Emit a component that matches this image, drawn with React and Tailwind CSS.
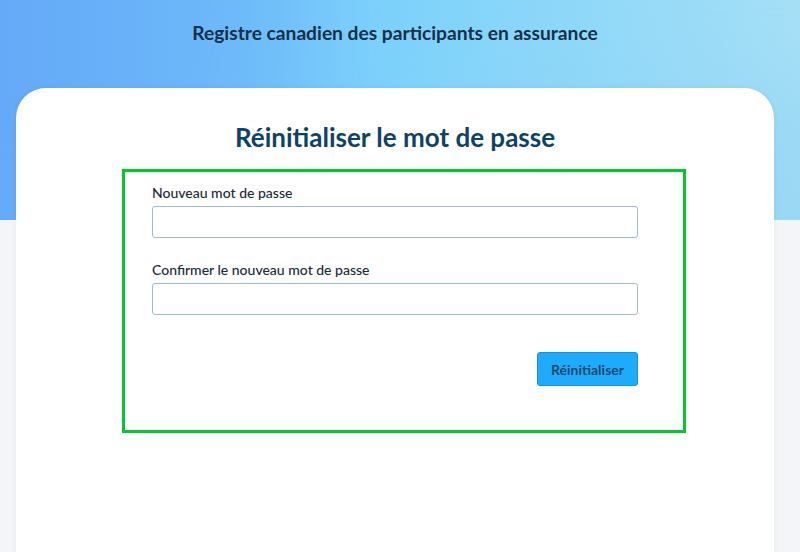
import React from "react";

export default function App() {
  return (
    <div
      className="relative w-full min-h-[552px] h-[552px] overflow-hidden bg-[#f4f5f8]"
      style={{ fontFamily: "Lato, 'Noto Sans', sans-serif" }}
    >
      <div className="absolute left-0 top-0 w-full h-[220px] bg-gradient-to-r from-[#68acf9] via-[#7dd2fb] to-[#a5dff6] overflow-hidden">
        <div className="absolute -left-[160px] -top-[200px] w-[460px] h-[460px] rounded-full bg-[#5ea5f7] opacity-30 blur-2xl" />
        <div className="absolute left-[380px] top-[90px] w-[560px] h-[300px] rounded-full bg-[#8ccff3] opacity-40 blur-2xl" />
      </div>
      <div className="relative flex flex-col">
        <div className="h-[66px] pr-[10px] flex items-center justify-center">
          <h1 className="text-[19.2px] font-bold text-[#15304a]">
            Registre canadien des participants en assurance
          </h1>
        </div>
        <div className="mt-[22px] ml-[16px] w-[758px] h-[470px] bg-white rounded-t-[30px] shadow-[0_0_6px_rgba(0,0,0,0.05)] flex flex-col">
          <h2 className="mt-[33px] h-[32px] leading-[32px] text-center text-[26px] font-bold text-[#0f4366]">
            Réinitialiser le mot de passe
          </h2>
          <div className="mt-[16px] ml-[106px] w-[564px] h-[264px] border-[3px] border-[#00c92a] pl-[27px] pt-[11px]">
            <form className="w-[486px] flex flex-col" onSubmit={(e) => e.preventDefault()}>
              <label className="text-[14px] leading-[20px] text-[#1c2b3a] font-medium">Nouveau mot de passe</label>
              <input
                type="password"
                className="mt-[3px] h-[32px] w-full rounded-[3px] border border-[#9fbccc] bg-white outline-none"
              />
              <label className="mt-[22px] text-[14px] leading-[20px] text-[#1c2b3a] font-medium">
                Confirmer le nouveau mot de passe
              </label>
              <input
                type="password"
                className="mt-[3px] h-[32px] w-full rounded-[3px] border border-[#9fbccc] bg-white outline-none"
              />
              <div className="mt-[37px] flex justify-end">
                <button
                  type="submit"
                  className="h-[34px] w-[101px] rounded-[3px] border border-[#1490e6] bg-[#1eabfc] text-[14px] font-bold text-[#184a6c]"
                >
                  Réinitialiser
                </button>
              </div>
            </form>
          </div>
        </div>
      </div>
    </div>
  );
}
